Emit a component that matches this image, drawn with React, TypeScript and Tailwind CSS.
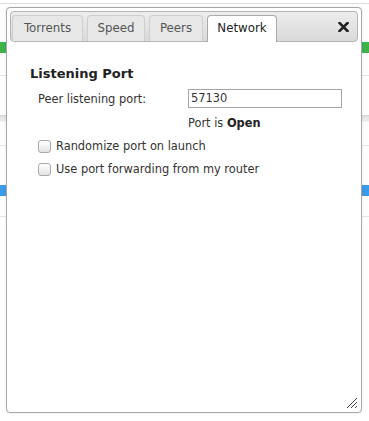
import React from 'react';

const tabs = [
    { name: 'Torrents', w: 'w-[71px]' },
    { name: 'Speed', w: 'w-[58px]' },
    { name: 'Peers', w: 'w-[54px]' },
    { name: 'Network', w: 'w-[70px]' },
];

const CheckBox: React.FC<{ label: string }> = ({ label }) => (
    <label className="flex items-center h-[23px]">
        <span className="w-[13px] h-[13px] rounded-[3px] border border-[#a9a9a9] bg-gradient-to-b from-white to-[#e4e4e4]" />
        <span className="ml-[5px]">{label}</span>
    </label>
);

const App: React.FC = () => {
    return (
        <div
            className="relative w-[369px] h-[421px] bg-white overflow-hidden"
            style={{ fontFamily: '"DejaVu Sans", Verdana, sans-serif' }}
        >
            {/* page behind the dialog */}
            <div className="flex flex-col">
                <div className="h-[3px]" />
                <div className="h-px bg-[#dcdcdc]" />
                <div className="h-[38px]" />
                <div className="h-[11px] bg-[#3db34a]" />
                <div className="h-[22px]" />
                <div className="h-px bg-[#e6e6e6]" />
                <div className="h-[39px]" />
                <div className="h-[7px] bg-gradient-to-b from-[#e2e2e2] to-[#f0f0f0] border-t border-[#d6d6d6]" />
                <div className="h-[23px]" />
                <div className="h-px bg-[#e6e6e6]" />
                <div className="h-[39px]" />
                <div className="h-[11px] bg-[#3a9be8]" />
                <div className="h-[20px]" />
                <div className="h-px bg-[#e6e6e6]" />
            </div>

            {/* dialog */}
            <div className="absolute left-[6px] top-[7px] w-[356px] h-[406px] border border-[#a8a8a8] rounded-[4px] bg-white p-[3px] shadow-[0_0_2px_rgba(0,0,0,0.15)] text-[11.4px] text-[#333]">
                <div className="relative h-[31px] border border-[#b5b5b5] rounded-[4px] bg-gradient-to-b from-[#ededed] to-[#d9d9d9] flex items-end pl-[1px] gap-[4px] text-[11.8px]">
                    {tabs.map((t) => {
                        const active = t.name === 'Network';
                        return (
                            <div
                                key={t.name}
                                className={
                                    active
                                        ? `${t.w} h-[27px] -mb-px flex items-center justify-center border border-b-0 border-[#aaa] rounded-t-[4px] bg-white text-[#222]`
                                        : `${t.w} h-[26px] flex items-center justify-center border border-b-0 border-[#cfcfcf] rounded-t-[4px] bg-[#e7e7e7] text-[#555]`
                                }
                            >
                                {t.name}
                            </div>
                        );
                    })}
                    <div className="absolute right-[8px] top-[10px]">
                        <svg width="11" height="10" viewBox="0 0 11 10">
                            <path d="M1.5 1 L9.5 9 M9.5 1 L1.5 9" stroke="#222" strokeWidth="2.6" strokeLinecap="square" />
                        </svg>
                    </div>
                </div>

                <div className="pl-[20px] pt-[23px]">
                    <div className="text-[13px] font-bold text-[#222] leading-[18px]">Listening Port</div>
                    <div className="pl-[8px] mt-[6px]">
                        <div className="flex items-center h-[19px]">
                            <span className="w-[150px] pt-[2px]">Peer listening port:</span>
                            <div className="w-[154px] h-[19px] border border-[#a5a5a5] pl-[2px] flex items-center">57130</div>
                        </div>
                        <div className="pl-[150px] mt-[7px] leading-[16px]">
                            Port is <b className="text-[#222]">Open</b>
                        </div>
                        <div className="mt-[4px]">
                            <CheckBox label="Randomize port on launch" />
                            <CheckBox label="Use port forwarding from my router" />
                        </div>
                    </div>
                </div>

                <div className="absolute right-[3px] bottom-[3px]">
                    <svg width="12" height="12" viewBox="0 0 12 12">
                        <path d="M11 1 L1 11 M11 5 L5 11 M11 9 L9 11" stroke="#444" strokeWidth="1" />
                    </svg>
                </div>
            </div>
        </div>
    );
};

export default App;
